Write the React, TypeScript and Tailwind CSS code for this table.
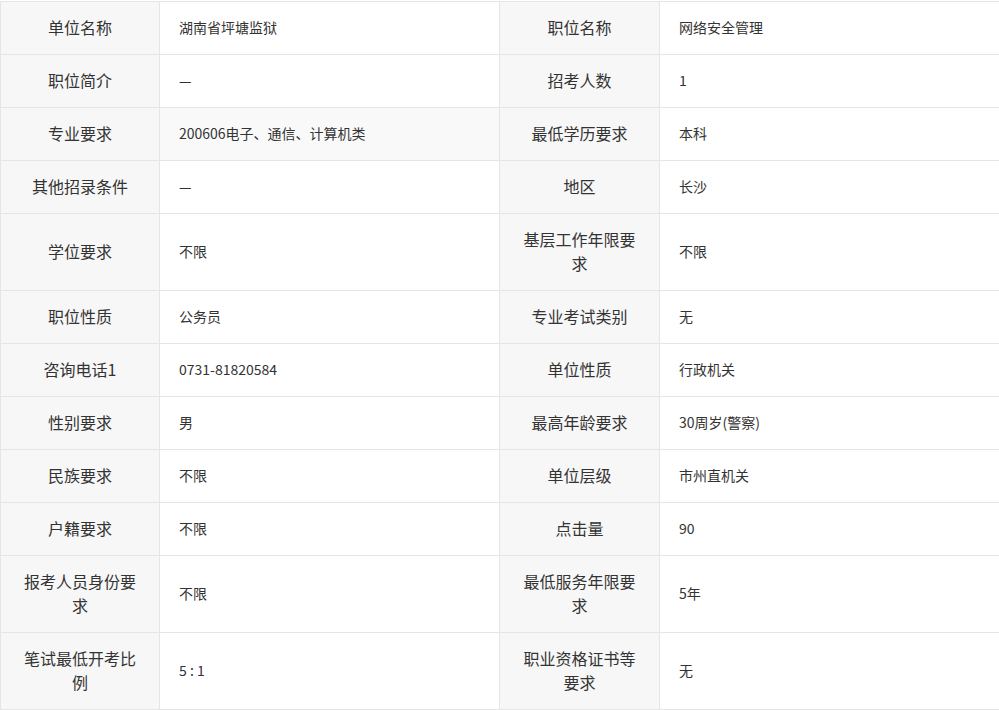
import React from "react";

// ─── Data ─────────────────────────────────────────────────────────────────────

type Row = { a: string; av: string; b: string; bv: string; shade?: boolean };

const ROWS: Row[] = [
  { a: "单位名称", av: "湖南省坪塘监狱", b: "职位名称", bv: "网络安全管理" },
  { a: "职位简介", av: "—", b: "招考人数", bv: "1" },
  { a: "专业要求", av: "200606电子、通信、计算机类", b: "最低学历要求", bv: "本科", shade: true },
  { a: "其他招录条件", av: "—", b: "地区", bv: "长沙" },
  { a: "学位要求", av: "不限", b: "基层工作年限要求", bv: "不限" },
  { a: "职位性质", av: "公务员", b: "专业考试类别", bv: "无" },
  { a: "咨询电话1", av: "0731-81820584", b: "单位性质", bv: "行政机关" },
  { a: "性别要求", av: "男", b: "最高年龄要求", bv: "30周岁(警察)" },
  { a: "民族要求", av: "不限", b: "单位层级", bv: "市州直机关" },
  { a: "户籍要求", av: "不限", b: "点击量", bv: "90" },
  { a: "报考人员身份要求", av: "不限", b: "最低服务年限要求", bv: "5年" },
  { a: "笔试最低开考比例", av: "5 : 1", b: "职业资格证书等要求", bv: "无" },
];

// ─── Cells ────────────────────────────────────────────────────────────────────

function Label({ children }: { children: React.ReactNode }) {
  return (
    <td className="border border-[#e5e5e5] bg-[#f7f7f7] px-4 pt-[13px] pb-[15px] text-center text-[16px] leading-[24px] text-[#333]">
      {children}
    </td>
  );
}

function Value({ children, shade }: { children: React.ReactNode; shade?: boolean }) {
  return (
    <td
      className={
        shade
          ? "border border-[#e5e5e5] bg-[#f9f9f9] pt-[13px] pb-[15px] pl-[19px] pr-4 text-left text-[14px] leading-[24px] text-[#333]"
          : "border border-[#e5e5e5] bg-white pt-[13px] pb-[15px] pl-[19px] pr-4 text-left text-[14px] leading-[24px] text-[#333]"
      }
    >
      {children}
    </td>
  );
}

// ─── Page ─────────────────────────────────────────────────────────────────────

export default function App() {
  return (
    <div className="h-[710px] w-[999px] overflow-hidden bg-white font-['Microsoft_YaHei','Noto_Sans_CJK_SC',sans-serif]">
      <table className="mt-px w-[999px] table-fixed border-collapse">
        <colgroup>
          <col className="w-[159px]" />
          <col className="w-[340px]" />
          <col className="w-[160px]" />
          <col className="w-[340px]" />
        </colgroup>
        <tbody>
          {ROWS.map((r) => (
            <tr key={r.a}>
              <Label>{r.a}</Label>
              <Value shade={r.shade}>{r.av}</Value>
              <Label>{r.b}</Label>
              <Value>{r.bv}</Value>
            </tr>
          ))}
        </tbody>
      </table>
    </div>
  );
}
